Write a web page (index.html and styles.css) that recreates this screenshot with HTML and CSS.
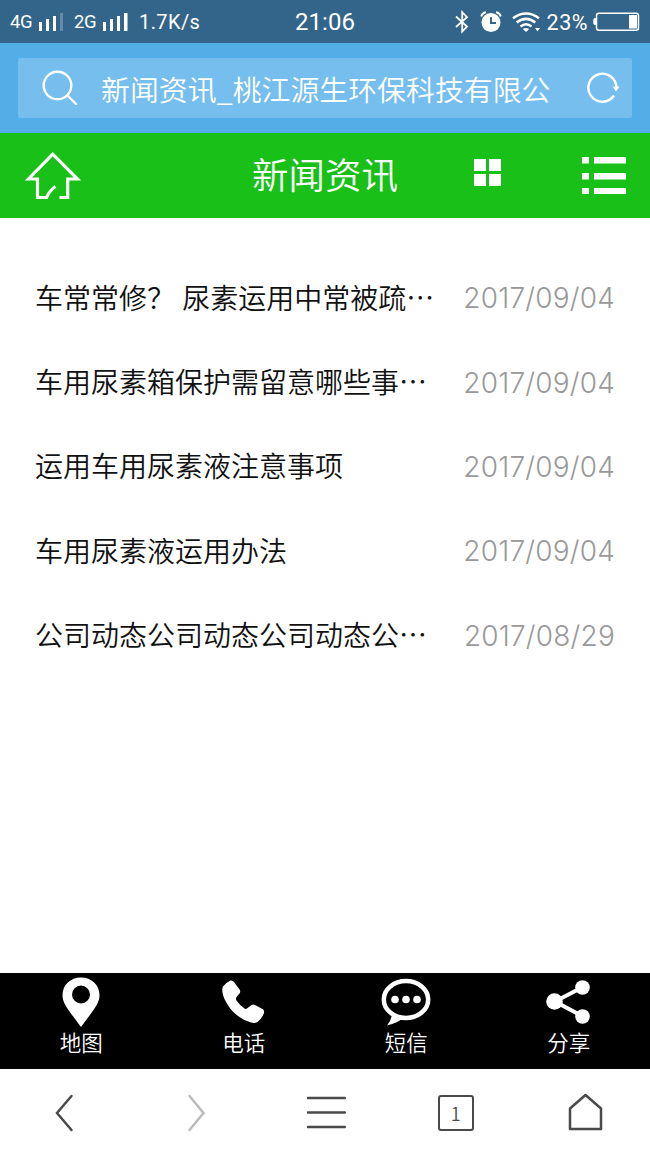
FILE: index.html
```html
<!DOCTYPE html>
<html lang="zh-CN">
<head>
    <meta charset="UTF-8">
    <meta name="viewport" content="width=device-width, initial-scale=1.0">
    <title>新闻资讯_桃江源生环保科技有限公司</title>
    <link rel="stylesheet" href="styles.css">
</head>
<body>
    <div class="statusbar">
        <div class="status-left">
            <span class="net">4G</span>
            <svg class="signal" width="25" height="18" viewBox="0 0 25 18" fill="#fff">
                <rect x="0" y="9" width="3" height="9"/>
                <rect x="7" y="6" width="3" height="12"/>
                <rect x="14" y="3" width="3" height="15"/>
                <rect x="21" y="0" width="3" height="18" opacity=".25"/>
            </svg>
            <span class="net">2G</span>
            <svg class="signal" width="25" height="18" viewBox="0 0 25 18" fill="#fff">
                <rect x="0" y="9" width="3" height="9"/>
                <rect x="7" y="6" width="3" height="12"/>
                <rect x="14" y="3" width="3" height="15"/>
                <rect x="21" y="0" width="3.5" height="18"/>
            </svg>
            <span class="speed">1.7K/s</span>
        </div>
        <div class="clock">21:06</div>
        <div class="status-right">
            <svg class="bluetooth" width="14" height="24" viewBox="0 0 14 24" fill="none" stroke="#fff" stroke-width="1.8">
                <path d="M1 6.5 12 16.5 7.2 21.5V2.2L12 7.2 1 17"/>
            </svg>
            <svg class="alarm" width="22" height="22" viewBox="0 0 22 22" fill="none" stroke="#fff">
                <circle cx="11" cy="11.5" r="9.5" fill="#fff" stroke="none"/>
                <path d="M1.3 5.5Q2 2 6 1.3M20.7 5.5Q20 2 16 1.3" stroke-width="2"/>
                <path d="M11 6.2V12h5" stroke="#33658a" stroke-width="2"/>
            </svg>
            <svg class="wifi" width="28" height="20" viewBox="0 0 28 20" fill="none" stroke="#fff" stroke-width="2.5">
                <path d="M1 6.2Q14-3.2 27 6.2M4.7 10.5Q14 3.2 23.3 10.5M8.5 14.5Q14 10 19.5 14.5"/>
                <path d="M10.8 17Q14 14.8 17.2 17L14 20ZM23 16h5l-2.5 3.5z" fill="#fff" stroke="none"/>
            </svg>
            <span class="percent">23%</span>
            <svg class="battery" width="47" height="20" viewBox="0 0 47 20" fill="none" stroke="#fff" stroke-width="1.5">
                <path d="M2.5 6.5H1.8Q.8 6.5.8 7.5v4q0 1 1 1h.7z" fill="#fff" stroke-width="1"/>
                <rect x="3.5" y="1.2" width="42" height="17" rx="2.5"/>
                <rect x="36" y="3" width="8" height="13.5" fill="#fff" stroke="none"/>
            </svg>
        </div>
    </div>

    <div class="browserbar">
        <div class="searchbox">
            <svg class="search-icon" width="36" height="36" viewBox="0 0 36 36" fill="none" stroke="#fff" stroke-width="2.4" stroke-linecap="round">
                <circle cx="15.5" cy="15.5" r="13.8"/>
                <path d="M25.5 25.5 34 34"/>
            </svg>
            <span class="search-text">新闻资讯_桃江源生环保科技有限公</span>
            <svg class="reload-icon" width="34" height="32" viewBox="0 0 34 32" fill="none" stroke="#fff" stroke-width="2.4">
                <path d="M30.3 17A14 14 0 1 0 28 23.5"/>
                <path d="M26.5 14.5h7L30 19.5z" fill="#fff" stroke="none"/>
            </svg>
        </div>
    </div>

    <div class="header">
        <svg class="home-icon" width="56" height="48" viewBox="0 0 56 48" fill="none" stroke="#fff" stroke-width="3.2">
            <path d="M30.5 34.5Q25 38 21.5 45.5H12.500V27H3.5L27.7 2.2 52.5 27H42.7V45.5H34.5"/>
        </svg>
        <h1 class="title">新闻资讯</h1>
        <svg class="grid-icon" width="27" height="27" viewBox="0 0 27 27" fill="#fff">
            <path d="M0 0h12v12H0zM15 0h12v12H15zM0 15h12v12H0zM15 15h12v12H15z"/>
        </svg>
        <svg class="list-icon" width="44" height="38" viewBox="0 0 44 38" fill="#fff">
            <path d="M0 0h7v6.5H0zM12 0h32v6.5H12zM0 16h7v6.5H0zM12 16h32v6.5H12zM0 31h7v6H0zM12 31h32v6H12z"/>
        </svg>
    </div>

    <ul class="news">
        <li><a class="news-title">车常常修？ 尿素运用中常被疏…</a><span class="date">2017/09/04</span></li>
        <li><a class="news-title">车用尿素箱保护需留意哪些事…</a><span class="date">2017/09/04</span></li>
        <li><a class="news-title">运用车用尿素液注意事项</a><span class="date">2017/09/04</span></li>
        <li><a class="news-title">车用尿素液运用办法</a><span class="date">2017/09/04</span></li>
        <li><a class="news-title">公司动态公司动态公司动态公…</a><span class="date">2017/08/29</span></li>
    </ul>

    <div class="footer">
        <div class="footer-item">
            <svg width="50" height="52" viewBox="0 0 50 52">
                <path d="M25 1.5C14.5 1.5 6.5 9 6.5 19c0 9 5.5 14 18.5 32 13-18 18.5-23 18.5-32C43.5 9 35.5 1.5 25 1.5zM25 9.5a9 9 0 1 1 0 18 9 9 0 0 1 0-18z" fill="#fff" fill-rule="evenodd"/>
            </svg>
            <span>地图</span>
        </div>
        <div class="footer-item">
            <svg width="50" height="52" viewBox="0 0 50 52">
                <path d="M4 10.5Q7 6.5 11.5 4.5Q13.5 4 15 6L20.5 13.5Q22 15.5 20.5 17.5L17.5 21Q16.5 22.5 17.5 24.5Q20.5 29 25.5 32.5Q27 33.5 28.5 32L32 29.5Q34 28 36 29L43.5 33Q45.5 34 45 37Q43 42.5 38.5 46Q36 47.5 32 46.5C20 43 8.5 33 4 19Q2.5 13 4 10.5z" fill="#fff"/>
            </svg>
            <span>电话</span>
        </div>
        <div class="footer-item">
            <svg width="50" height="52" viewBox="0 0 50 52" fill="#fff">
                <ellipse cx="25" cy="23.5" rx="22.2" ry="18.5" fill="none" stroke="#fff" stroke-width="4.5"/>
                <path d="M11 36Q11 44 6 49.5Q17 47 22 42z"/>
                <circle cx="14" cy="23.5" r="3.8"/>
                <circle cx="25" cy="23.5" r="3.8"/>
                <circle cx="36" cy="23.5" r="3.8"/>
            </svg>
            <span>短信</span>
        </div>
        <div class="footer-item">
            <svg width="50" height="52" viewBox="0 0 50 52" fill="#fff">
                <path d="M38 11.5 11 25.5 38 40" fill="none" stroke="#fff" stroke-width="4"/>
                <circle cx="10.5" cy="25.5" r="8.3"/>
                <circle cx="38.5" cy="11.5" r="7.3"/>
                <circle cx="38.5" cy="40.5" r="7.3"/>
            </svg>
            <span>分享</span>
        </div>
    </div>

    <div class="navbar">
        <svg width="40" height="40" viewBox="0 0 40 40"><path d="M26.5 3 12 20 26.5 37"/></svg>
        <svg class="disabled" width="40" height="40" viewBox="0 0 40 40"><path d="M13.5 3 27.5 20 13.5 37"/></svg>
        <svg width="40" height="40" viewBox="0 0 40 40"><path d="M.8 5h37M.8 19.5h37M.8 34h37"/></svg>
        <div class="tabs">1</div>
        <svg width="40" height="40" viewBox="0 0 40 40"><path d="M20.5 2 36 15.5V36H5V15.5z" stroke-linejoin="round"/></svg>
    </div>
</body>
</html>
```

FILE: styles.css
```css
* { box-sizing: border-box; }
body {
    margin: 0;
    height: 1156px;
    display: flex;
    flex-direction: column;
    background: #fff;
    font-family: "Noto Sans CJK SC", sans-serif;
    font-weight: 350;
    overflow: hidden;
}
svg { display: block; flex: none; }

/* 状态栏 */
.statusbar {
    height: 43px;
    display: grid;
    grid-template-columns: 1fr auto 1fr;
    align-items: center;
    padding: 1px 10px 0 10px;
    background: #33658a;
    color: #fff;
    font-family: Roboto, sans-serif;
    font-weight: 400;
}
.status-left, .status-right { display: flex; align-items: center; }
.status-right { justify-content: flex-end; }
.net { font-size: 18.5px; width: 24px; letter-spacing: -0.5px; }
.signal { margin: 0 10px 0 5px; }
.net + .signal + .speed { margin-left: 1px; }
.speed { font-size: 20px; letter-spacing: 0.4px; }
.clock { font-size: 24px; }
.alarm { margin-left: 11px; }
.wifi { margin-left: 10px; }
.percent { font-size: 21.5px; letter-spacing: 0.5px; margin: 0 5px 0 7px; }

/* 地址栏 */
.browserbar { height: 90px; padding: 15px 18px; background: #53ade7; }
.searchbox {
    height: 60px;
    display: flex;
    align-items: center;
    padding: 0 12px 0 24px;
    border-radius: 2px;
    background: #75beed;
    color: #fff;
}
.search-text { flex: 1; margin-left: 23px; font-size: 28.9px; line-height: 60px; white-space: nowrap; }

/* 标题栏 */
.header {
    height: 85px;
    display: flex;
    align-items: center;
    padding: 0 24px 0 25px;
    background: #18c018;
    color: #fff;
}
.title { margin: -4px 0 0 171px; font-size: 36.5px; font-weight: 350; line-height: 81px; }
.grid-icon { margin: -6px 0 0 76px; }
.list-icon { margin-left: auto; }

/* 新闻列表 */
.news { flex: 1; margin: 0; padding: 38px 35px 0; list-style: none; }
.news li {
    height: 84.4px;
    display: flex;
    justify-content: space-between;
    align-items: center;
}
.news-title { padding-bottom: 3px; font-size: 28px; word-spacing: 1px; color: #111; white-space: pre; }
.date { font-family: Inter, sans-serif; font-weight: 300; font-size: 28px; letter-spacing: 0.2px; color: #999; }

/* 底部菜单 */
.footer { height: 96px; display: flex; background: #000; color: #fff; }
.footer-item {
    flex: 1;
    display: flex;
    flex-direction: column;
    align-items: center;
    padding-top: 3px;
    font-size: 21.5px;
    line-height: 28px;
}

/* 浏览器导航 */
.navbar {
    height: 87px;
    display: flex;
    justify-content: space-around;
    align-items: center;
}
.navbar svg { fill: none; stroke: #4a4a4a; stroke-width: 2.5; stroke-linecap: round; }
.navbar .disabled { stroke: #bbb; }
.tabs {
    width: 36px;
    height: 36px;
    border: 2px solid #4a4a4a;
    border-radius: 3px;
    color: #4a4a4a;
    font: 350 18px/33px "Noto Sans CJK SC", sans-serif;
    text-align: center;
}
```
